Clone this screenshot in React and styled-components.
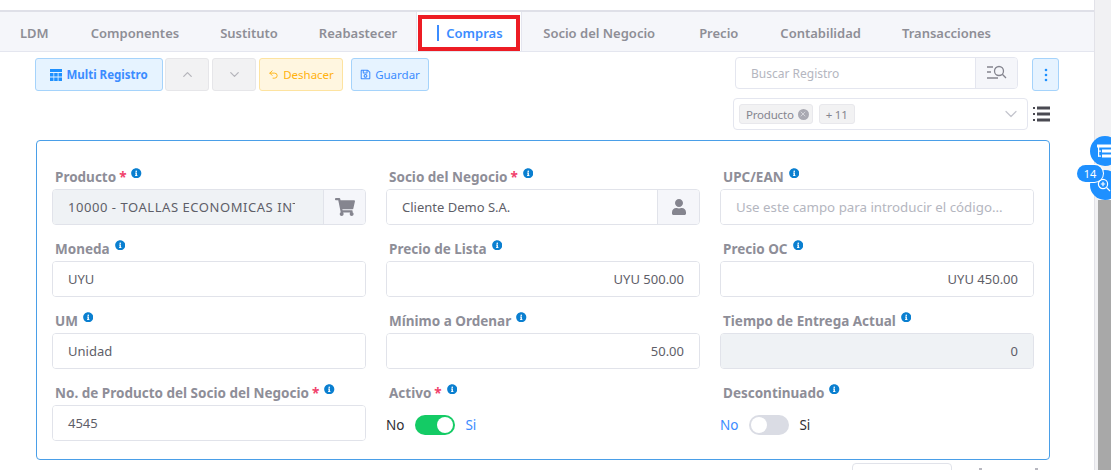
import React from "react";
import styled, { createGlobalStyle } from "styled-components";
import { FaShoppingCart, FaUser, FaInfoCircle, FaRegSave } from "react-icons/fa";
import { LuChevronUp, LuChevronDown, LuUndo2, LuX } from "react-icons/lu";

const GlobalStyle = createGlobalStyle`
  html, body {
    margin: 0;
    padding: 0;
    height: 470px;
    overflow: hidden;
    background: #ffffff;
    font-family: "Noto Sans", "Liberation Sans", sans-serif;
  }
`;

const Page = styled.div`
  position: relative;
  display: flex;
  width: 1111px;
  height: 470px;
  overflow: hidden;
`;

const Main = styled.div`
  flex: 1;
  min-width: 0;
  padding-top: 10px;
`;

const TabBar = styled.div`
  display: flex;
  height: 39px;
  background: #f5f6fa;
  border-top: 2px solid #dfe0e8;
  border-bottom: 1px solid #e4e6ef;
`;

const Tab = styled.div`
  display: flex;
  align-items: center;
  padding: 3px 20px 0;
  margin-right: ${(p) => p.$gap || 0}px;
  font-size: 13px;
  font-weight: 600;
  color: #8e8e96;
`;

const ActiveTab = styled.div`
  display: flex;
  align-items: flex-end;
  padding: 0 1px;
  margin: 0 1px 0 0;
  background: #ffffff;
  border-left: 1px solid #e4e6ef;
  border-right: 1px solid #e4e6ef;
`;

const RedBox = styled.div`
  display: flex;
  align-items: center;
  width: 102px;
  height: 36px;
  box-sizing: border-box;
  padding-left: 15px;
  border: 4px solid #ed1c24;
  font-size: 13px;
  font-weight: 600;
  color: #3b8cff;
  &::before {
    content: "";
    width: 2px;
    height: 16px;
    margin-right: 7px;
    background: #3b8cff;
  }
`;

const ToolRow = styled.div`
  display: flex;
  justify-content: space-between;
  padding: 6px 35px 0 35px;
`;

const Actions = styled.div`
  display: flex;
  align-items: flex-start;
  gap: 3px;
`;

const tones = {
  blue: "background:#e6f3ff;border-color:#a5d3fb;color:#3b8cff;",
  gray: "background:#f2f2f3;border-color:#e6e6e9;color:#b5b5bb;",
  amber: "background:#fff6e0;border-color:#fde3a0;color:#ffb20f;",
};

const ToolButton = styled.div`
  display: flex;
  align-items: center;
  justify-content: center;
  gap: 4px;
  box-sizing: border-box;
  width: ${(p) => p.$w}px;
  height: 33px;
  margin-left: ${(p) => p.$ml || 0}px;
  border: 1px solid;
  border-radius: 3px;
  font-size: 11.5px;
  font-weight: ${(p) => (p.$bold ? 700 : 400)};
  ${(p) => tones[p.$tone]}
`;

const RightTools = styled.div`
  display: flex;
  flex-direction: column;
  margin-top: -1px;
`;

const SearchRow = styled.div`
  display: flex;
  align-items: flex-start;
  padding-left: 2px;
`;

const SearchBox = styled.div`
  display: flex;
  width: 283px;
  height: 32px;
  box-sizing: border-box;
  border: 1px solid #e4e6ef;
  border-radius: 4px;
  overflow: hidden;
`;

const SearchText = styled.div`
  flex: 1;
  display: flex;
  align-items: center;
  padding-left: 15px;
  font-size: 12px;
  color: #b4b6c0;
`;

const SearchAddon = styled.div`
  display: flex;
  align-items: center;
  justify-content: center;
  width: 41px;
  background: #f5f6fa;
  border-left: 1px solid #e4e6ef;
`;

const MenuButton = styled(ToolButton)`
  margin: 1px 0 0 14px;
`;

const SelectRow = styled.div`
  display: flex;
  align-items: center;
  margin-top: 7px;
`;

const SelectBox = styled.div`
  display: flex;
  align-items: center;
  gap: 6px;
  width: 295px;
  height: 32px;
  box-sizing: border-box;
  padding: 0 6px 0 5px;
  border: 1px solid #e4e6ef;
  border-radius: 4px;
  color: #c5c6ce;
`;

const Chip = styled.div`
  display: flex;
  align-items: center;
  gap: 4px;
  height: 20px;
  box-sizing: border-box;
  padding: 0 ${(p) => (p.$close ? 3 : 6)}px 0 6px;
  background: #f2f2f3;
  border: 1px solid #e8e8ec;
  border-radius: 3px;
  font-size: 11.5px;
  letter-spacing: -0.2px;
  color: #85858f;
`;

const ChipClose = styled.span`
  display: flex;
  align-items: center;
  justify-content: center;
  width: 11px;
  height: 11px;
  border-radius: 50%;
  background: #a9a9b2;
  color: #e8e8ec;
`;

const CaretSlot = styled.div`
  margin-left: auto;
  display: flex;
`;

const ColumnsToggle = styled.div`
  display: flex;
  margin-left: 5px;
`;

const Card = styled.div`
  display: grid;
  grid-template-columns: repeat(3, 314px);
  column-gap: 20px;
  width: 1014px;
  height: 320px;
  box-sizing: border-box;
  margin: 10px 0 0 36px;
  padding: 12px 15px 18px;
  border: 1px solid #4a9fe8;
  border-radius: 4px;
`;

const Field = styled.div`
  display: flex;
  flex-direction: column;
  padding-top: 11px;
`;

const Label = styled.div`
  display: flex;
  align-items: center;
  height: 26px;
  margin-bottom: -1px;
  padding-left: 3px;
  font-size: 13.5px;
  font-weight: 700;
  color: #8e8e98;
  white-space: nowrap;
`;

const Required = styled.span`
  margin-left: 3px;
  color: #f1416c;
`;

const Info = styled.span`
  display: flex;
  margin: -8px 0 0 5px;
  color: #0a7fd0;
  font-size: 10.5px;
`;

const InputGroup = styled.div`
  display: flex;
  height: 36px;
  box-sizing: border-box;
  border: 1px solid #e1e3ea;
  border-radius: 4px;
  overflow: hidden;
`;

const InputValue = styled.div`
  flex: 1;
  min-width: 0;
  display: flex;
  align-items: center;
  justify-content: ${(p) => (p.$right ? "flex-end" : "flex-start")};
  padding: 0 15px;
  background: ${(p) => (p.$disabled ? "#eff2f5" : "#ffffff")};
  font-size: 13px;
  color: #5e5e68;
  white-space: nowrap;
  overflow: hidden;
`;

const Clip = styled.span`
  display: block;
  width: 227px;
  overflow: hidden;
  letter-spacing: 0.55px;
`;

const Placeholder = styled.span`
  color: #b4b6c0;
  font-size: 13.3px;
`;

const Addon = styled.div`
  display: flex;
  align-items: center;
  justify-content: center;
  width: 41px;
  background: #f5f6fa;
  border-left: 1px solid #e1e3ea;
  color: #85858f;
  font-size: 20px;
`;

const SwitchRow = styled.div`
  display: flex;
  align-items: center;
  gap: 10px;
  height: 36px;
  padding-top: 4px;
  box-sizing: border-box;
  font-size: 13.5px;
`;

const SwitchText = styled.span`
  color: ${(p) => (p.$on ? "#3b8cff" : "#2e2e34")};
`;

const Switch = styled.div`
  display: flex;
  justify-content: ${(p) => (p.$on ? "flex-end" : "flex-start")};
  align-items: center;
  width: 40px;
  height: 20px;
  margin-left: 1px;
  box-sizing: border-box;
  padding: 0 2px;
  border-radius: 10px;
  background: ${(p) => (p.$on ? "#14cb65" : "#dadce4")};
  &::after {
    content: "";
    width: 16px;
    height: 16px;
    border-radius: 50%;
    background: #ffffff;
  }
`;

const Footer = styled.div`
  display: flex;
  margin: 3px 0 0 852px;
`;

const FooterInput = styled.div`
  width: 100px;
  height: 30px;
  box-sizing: border-box;
  border: 1px solid #e1e3ea;
  border-radius: 4px;
`;

const PagerMark = styled.div`
  width: 3px;
  height: 2px;
  margin: 5px 0 0 ${(p) => p.$ml}px;
  background: #b8b8c0;
`;

const ScrollTrack = styled.div`
  width: 17px;
  flex-shrink: 0;
  box-sizing: border-box;
  padding: 200px 0 0 3px;
  background: #f1f1f3;
  border-left: 1px solid #e2e2e8;
`;

const ScrollThumb = styled.div`
  height: 270px;
  background: #a8a8a8;
`;

const FloatButton = styled.div`
  position: absolute;
  left: 1090px;
  top: ${(p) => p.$top}px;
  display: flex;
  align-items: center;
  padding-left: 7px;
  box-sizing: border-box;
  width: 30px;
  height: 30px;
  border-radius: 50%;
  background: #1e90ff;
  color: #ffffff;
`;

const CountBadge = styled.div`
  position: absolute;
  left: 1077px;
  top: 165px;
  display: flex;
  align-items: center;
  justify-content: center;
  width: 26px;
  height: 17px;
  box-sizing: border-box;
  border-radius: 9px;
  background: #1e90ff;
  box-shadow: 0 0 0 1px #ffffff;
  font-size: 11px;
  color: #ffffff;
`;

const GridIcon = () => (
  <svg width="12" height="12" viewBox="0 0 12 12" fill="#1e90ff">
    <rect width="12" height="3" />
    <rect y="4" width="3.5" height="3.5" />
    <rect x="4.2" y="4" width="3.5" height="3.5" />
    <rect x="8.5" y="4" width="3.5" height="3.5" />
    <rect y="8.5" width="3.5" height="3.5" />
    <rect x="4.2" y="8.5" width="3.5" height="3.5" />
    <rect x="8.5" y="8.5" width="3.5" height="3.5" />
  </svg>
);

const SearchListIcon = () => (
  <svg width="22" height="16" viewBox="0 0 22 16" fill="none" stroke="#85858f" strokeWidth="1.3">
    <path d="M1 2h6M1 7h4M1 13h11" />
    <circle cx="13" cy="6" r="4.5" />
    <path d="M16.3 9.3 L20 13" />
  </svg>
);

const DotsIcon = () => (
  <svg width="4" height="14" viewBox="0 0 4 14" fill="#1e90ff">
    <circle cx="2" cy="2" r="1.3" />
    <circle cx="2" cy="7" r="1.3" />
    <circle cx="2" cy="12" r="1.3" />
  </svg>
);

const ListIcon = () => (
  <svg width="17" height="16" viewBox="0 0 17 16" fill="#4a4a52">
    <rect x="0" y="1" width="2" height="2" />
    <rect x="4" y="0.5" width="13" height="3" />
    <rect x="0" y="7" width="2" height="2" />
    <rect x="4" y="6.5" width="13" height="3" />
    <rect x="0" y="13" width="2" height="2" />
    <rect x="4" y="12.5" width="13" height="3" />
  </svg>
);

const TreeIcon = () => (
  <svg width="15" height="14" viewBox="0 0 15 14" fill="#ffffff">
    <rect x="0" y="0.5" width="15" height="3" />
    <rect x="1" y="3" width="1.2" height="9.5" />
    <rect x="1" y="6.5" width="3" height="1.2" />
    <rect x="1" y="11.5" width="3" height="1.2" />
    <rect x="5" y="5.5" width="10" height="3" />
    <rect x="5" y="10.5" width="10" height="3" />
  </svg>
);

const ZoomIcon = () => (
  <svg width="14" height="14" viewBox="0 0 14 14" fill="none" stroke="#ffffff" strokeWidth="1.2">
    <circle cx="6" cy="6" r="4.6" />
    <path d="M6 3.8v4.4M3.8 6h4.4M9.5 9.5 13 13" />
  </svg>
);

const tabs = [
  { name: "LDM", gap: 2 },
  { name: "Componentes", gap: 1 },
  { name: "Sustituto", gap: 1 },
  { name: "Reabastecer", gap: -1 },
  { name: "Compras", active: true },
  { name: "Socio del Negocio", gap: 4 },
  { name: "Precio", gap: 2 },
  { name: "Contabilidad", gap: 1 },
  { name: "Transacciones" },
];

const FieldLabel = ({ text, required }) => (
  <Label>
    {text}
    {required && <Required>*</Required>}
    <Info>
      <FaInfoCircle />
    </Info>
  </Label>
);

const TextField = ({ label, required, value, right, disabled, placeholder }) => (
  <Field>
    <FieldLabel text={label} required={required} />
    <InputGroup>
      <InputValue $right={right} $disabled={disabled}>
        {placeholder ? <Placeholder>{placeholder}</Placeholder> : value}
      </InputValue>
    </InputGroup>
  </Field>
);

const SwitchField = ({ label, required, on }) => (
  <Field>
    <FieldLabel text={label} required={required} />
    <SwitchRow>
      <SwitchText $on={!on}>No</SwitchText>
      <Switch $on={on} />
      <SwitchText $on={on}>Si</SwitchText>
    </SwitchRow>
  </Field>
);

export default function App() {
  return (
    <Page>
      <GlobalStyle />
      <Main>
        <TabBar>
          {tabs.map((tab) =>
            tab.active ? (
              <ActiveTab key={tab.name}>
                <RedBox>{tab.name}</RedBox>
              </ActiveTab>
            ) : (
              <Tab key={tab.name} $gap={tab.gap}>
                {tab.name}
              </Tab>
            )
          )}
        </TabBar>

        <ToolRow>
          <Actions>
            <ToolButton $w={128} $tone="blue" $bold>
              <GridIcon />
              Multi Registro
            </ToolButton>
            <ToolButton $w={44} $ml={-1} $tone="gray">
              <LuChevronUp size={15} />
            </ToolButton>
            <ToolButton $w={44} $tone="gray">
              <LuChevronDown size={15} />
            </ToolButton>
            <ToolButton $w={84} $tone="amber">
              <LuUndo2 size={11} />
              Deshacer
            </ToolButton>
            <ToolButton $w={78} $ml={5} $tone="blue">
              <FaRegSave size={11} />
              Guardar
            </ToolButton>
          </Actions>

          <RightTools>
            <SearchRow>
              <SearchBox>
                <SearchText>Buscar Registro</SearchText>
                <SearchAddon>
                  <SearchListIcon />
                </SearchAddon>
              </SearchBox>
              <MenuButton $w={27} $tone="blue">
                <DotsIcon />
              </MenuButton>
            </SearchRow>
            <SelectRow>
              <SelectBox>
                <Chip $close>
                  Producto
                  <ChipClose>
                    <LuX size={8} />
                  </ChipClose>
                </Chip>
                <Chip>+ 11</Chip>
                <CaretSlot>
                  <LuChevronDown size={20} strokeWidth={1.5} />
                </CaretSlot>
              </SelectBox>
              <ColumnsToggle>
                <ListIcon />
              </ColumnsToggle>
            </SelectRow>
          </RightTools>
        </ToolRow>

        <Card>
          <Field>
            <FieldLabel text="Producto" required />
            <InputGroup>
              <InputValue $disabled>
                <Clip>10000 - TOALLAS ECONOMICAS INTERNACIONALES</Clip>
              </InputValue>
              <Addon>
                <FaShoppingCart />
              </Addon>
            </InputGroup>
          </Field>
          <Field>
            <FieldLabel text="Socio del Negocio" required />
            <InputGroup>
              <InputValue>Cliente Demo S.A.</InputValue>
              <Addon>
                <FaUser size={16} />
              </Addon>
            </InputGroup>
          </Field>
          <TextField label="UPC/EAN" placeholder="Use este campo para introducir el código..." />

          <TextField label="Moneda" value="UYU" />
          <TextField label="Precio de Lista" value="UYU 500.00" right />
          <TextField label="Precio OC" value="UYU 450.00" right />

          <TextField label="UM" value="Unidad" />
          <TextField label="Mínimo a Ordenar" value="50.00" right />
          <TextField label="Tiempo de Entrega Actual" value="0" right disabled />

          <TextField label="No. de Producto del Socio del Negocio" required value="4545" />
          <SwitchField label="Activo" required on />
          <SwitchField label="Descontinuado" />
        </Card>

        <Footer>
          <FooterInput />
          <PagerMark $ml={27} />
          <PagerMark $ml={53} />
        </Footer>
      </Main>

      <ScrollTrack>
        <ScrollThumb />
      </ScrollTrack>

      <FloatButton $top={136}>
        <TreeIcon />
      </FloatButton>
      <FloatButton $top={170}>
        <ZoomIcon />
      </FloatButton>
      <CountBadge>14</CountBadge>
    </Page>
  );
}
